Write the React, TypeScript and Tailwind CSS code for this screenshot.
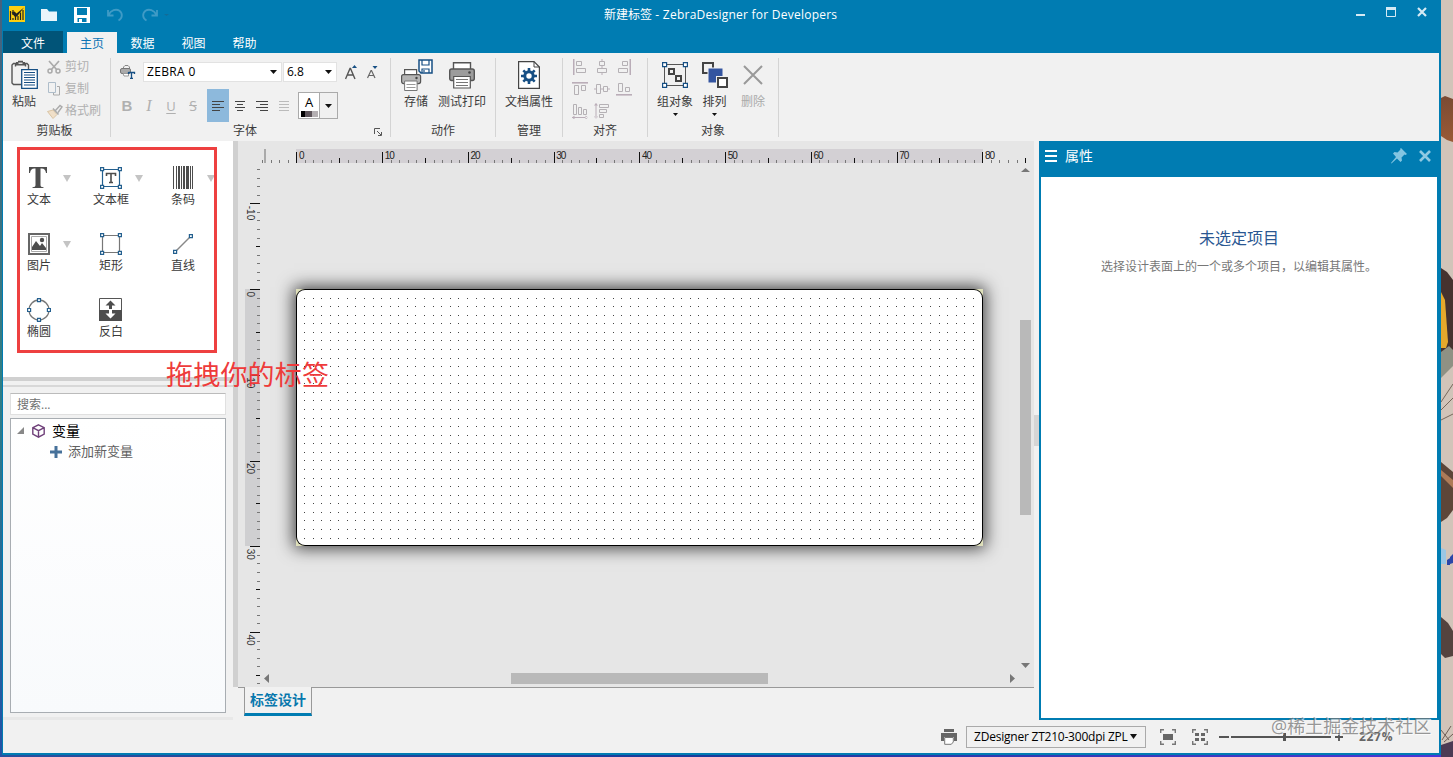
import type { ReactNode } from "react";

const STEP = 8.575;

function Svg({ w, h, children, className = "" }: { w: number; h: number; children: ReactNode; className?: string }) {
  return (
    <svg width={w} height={h} viewBox={`0 0 ${w} ${h}`} fill="none" className={`block shrink-0 ${className}`}>
      {children}
    </svg>
  );
}

function Down({ color = "#111", w = 8, h = 5 }: { color?: string; w?: number; h?: number }) {
  return (
    <Svg w={w} h={h}>
      <path d={`M0 0H${w}L${w / 2} ${h}Z`} fill={color} />
    </Svg>
  );
}

function TitleBar() {
  return (
    <div className="flex h-[30px] shrink-0 items-center pl-[6px] text-white">
      <Svg w={16} h={16} className="mr-[16px] -mt-[2px]">
        <rect width="16" height="16" fill="#fccf10" />
        <path d="M1.500 5v9M4 4v5M4 12v2M6.500 10v4M9 10v4M11.500 6.500v7.500M14 4v10" stroke="#222" strokeWidth="1.200" />
        <path d="M2.500 6.500L5.500 5.500 7.500 7.500 15 1.500 8 10.500 5.500 10.500Z" fill="#222" />
      </Svg>
      <Svg w={16} h={12} className="mr-[17px]">
        <path d="M0 0h6l2 2.500h8V12H0Z" fill="#e9f5fb" />
      </Svg>
      <Svg w={16} h={16} className="mr-[17px]">
        <path d="M0 0h16v16H0Z" fill="#fff" />
        <path d="M3 1h10v7H3ZM3.500 11h9v4h-9Z" fill="#007cb2" />
        <path d="M5 12h3v3H5Z" fill="#fff" />
      </Svg>
      <Svg w={17} h={14} className="mr-[17px]">
        <path d="M1 2v5.500h5.500M1.500 7C4 2 9 .5 12.500 2.800C16 5.500 15.500 10.500 11.500 12.500" stroke="#3f9bc6" strokeWidth="1.800" />
      </Svg>
      <Svg w={17} h={14}>
        <path d="M16 2v5.500h-5.500M15.500 7C13 2 8 .5 4.500 2.800C1 5.500 1.500 10.500 5.500 12.500" stroke="#3f9bc6" strokeWidth="1.800" />
      </Svg>
      <Svg w={6} h={4} className="ml-[6px]">
        <path d="M0 1h5L2.500 3Z" fill="#126c98" />
      </Svg>
      <div className="flex h-[30px] flex-1 items-center pl-[434px] text-[12px] leading-[30px] tracking-[0.240px]">
        <span className="tracking-normal">新建标签</span>
        <span className="whitespace-pre"> - ZebraDesigner for Developers</span>
      </div>
      <Svg w={9} h={3} className="mr-[21px] mt-[1px]">
        <path d="M0 0h9v2H0Z" fill="#d5eaf4" />
      </Svg>
      <Svg w={10} h={10} className="mr-[21px] -mt-[6px]">
        <path d="M.5 1.500h9v8h-9Z" stroke="#d5eaf4" />
        <path d="M0 0h10v3H0Z" fill="#d5eaf4" />
      </Svg>
      <Svg w={10} h={10} className="mr-[12px] -mt-[6px]">
        <path d="M1 1l8 8M9 1l-8 8" stroke="#d5eaf4" strokeWidth="2.200" />
      </Svg>
    </div>
  );
}

function Tabs() {
  return (
    <div className="flex h-[23px] shrink-0 text-[12px] leading-[25px] text-white">
      <div className="mt-[1px] h-[22px] w-[60px] bg-[#015478] text-center">文件</div>
      <div className="ml-[4px] mt-[2px] h-[21px] w-[50px] bg-[#f1f1f1] text-center leading-[23px] text-[#0c74b5]">主页</div>
      <div className="mt-[1px] w-[51px] text-center">数据</div>
      <div className="mt-[1px] w-[51px] text-center">视图</div>
      <div className="mt-[1px] w-[51px] text-center">帮助</div>
    </div>
  );
}

function Group({ label, width, labelPad = "", children }: { label: string; width: string; labelPad?: string; children: ReactNode }) {
  return (
    <div className={`relative mb-[3px] mt-[5px] flex h-[79px] shrink-0 flex-col border-r border-[#d4d4d4] ${width}`}>
      <div className="flex h-[65px] shrink-0">{children}</div>
      <div className={`h-[14px] text-center text-[12px] leading-[15px] text-[#3c3c3c] ${labelPad}`}>{label}</div>
    </div>
  );
}

function BigButton({ label, width, children, disabled, arrow }: { label: string; width: string; children: ReactNode; disabled?: boolean; arrow?: boolean }) {
  return (
    <div className={`flex shrink-0 flex-col items-center ${width}`}>
      <div className="flex h-[34px] items-center justify-center">{children}</div>
      <div className={`h-[20px] whitespace-nowrap text-[12px] leading-[19px] ${disabled ? "text-[#aaa]" : "text-[#3c3c3c]"}`}>{label}</div>
      {arrow && (
        <div className="pt-[1px]">
          <Down w={5} h={3} />
        </div>
      )}
    </div>
  );
}

function ClipItem({ label, children }: { label: string; children: ReactNode }) {
  return (
    <div className="flex h-[22px] items-center text-[12px] leading-[18px] text-[#b0b0b0]">
      <div className="flex w-[18px] items-center">{children}</div>
      {label}
    </div>
  );
}

function Lines({ xs, color = "#444" }: { xs: number[][]; color?: string }) {
  return (
    <Svg w={12} h={12}>
      <path d={xs.map(([a, b], i) => `M${a} ${i * 3 + 1.5}H${b}`).join("")} stroke={color} />
    </Svg>
  );
}

function FontGroup() {
  return (
    <Group label="字体" width="w-[280px]" labelPad="pr-[11px]">
      <div className="flex flex-col pl-[9px]">
        <div className="mt-[4px] flex h-[20px] items-center">
          <Svg w={16} h={14} className="mr-[7px]">
            <path d="M3.500 4.500V2L5 .5h3L9.500 2v2.500" stroke="#888" />
            <rect x=".5" y="3.500" width="10" height="5" rx="1.500" fill="#aaa" stroke="#777" />
            <path d="M3 8.500h5.500v2.500H4Z" fill="#fff" stroke="#999" />
            <path d="M8.500 7.500h6v1.500M11.500 7.500v6M10 13.500h3M8.500 7v2" stroke="#164f84" strokeWidth="1.300" />
          </Svg>
          <div className="flex h-[20px] w-[139px] items-center justify-between border border-[#e2e2e2] bg-white pl-[3px] pr-[4px] text-[12px] leading-[20px] tracking-[0.350px] text-black">
            ZEBRA 0<Down w={7} h={4} />
          </div>
          <div className="ml-[1px] flex h-[20px] w-[54px] items-center justify-between border border-[#e2e2e2] bg-white pl-[3px] pr-[4px] text-[12px] leading-[20px] text-black">
            6.8<Down w={7} h={4} />
          </div>
          <Svg w={13} h={15} className="ml-[8px]">
            <path d="M.5 14L5 3.500h.500L10 14M2 10h6.500" stroke="#555" strokeWidth="1.400" />
            <path d="M7 3h5L9.500 0Z" fill="#164f84" />
          </Svg>
          <Svg w={12} h={13} className="ml-[9px]">
            <path d="M.5 12L4 4.500h.500L8 12M2 9.500h5" stroke="#666" strokeWidth="1.200" />
            <path d="M5.500 0h5L8 3Z" fill="#164f84" />
          </Svg>
        </div>
        <div className="mt-[7px] flex h-[33px] items-center text-[#b0b0b0]">
          <div className="w-[14px] text-center font-['Liberation_Sans'] text-[15px] font-bold leading-[20px]">B</div>
          <div className="ml-[8px] w-[14px] text-center font-['Liberation_Serif'] text-[16px] italic leading-[20px]">I</div>
          <div className="ml-[8px] w-[14px] text-center text-[13px] leading-[20px] underline underline-offset-2">U</div>
          <div className="ml-[8px] w-[14px] text-center text-[14px] leading-[20px] line-through">S</div>
          <div className="ml-[7px] flex h-[33px] w-[22px] items-center justify-center bg-[#8db9dc]">
            <Lines xs={[[0, 12], [0, 8], [0, 12], [0, 8]]} />
          </div>
          <div className="ml-[5px]"><Lines xs={[[1, 11], [3, 9], [1, 11], [3, 9]]} /></div>
          <div className="ml-[10px]"><Lines xs={[[0, 12], [4, 12], [0, 12], [4, 12]]} /></div>
          <div className="ml-[10px]"><Lines color="#bbb" xs={[[1, 11], [1, 11], [1, 11], [1, 11]]} /></div>
          <div className="ml-[8px] flex h-[27px] w-[40px] border border-[#aaa]">
            <div className="flex w-[20px] flex-col items-center bg-white">
              <div className="h-[18px] text-[13px] leading-[18px] text-black">A</div>
              <Svg w={17} h={6}>
                <path d="M0 0h4v6H0Z" fill="#000" />
                <path d="M4 0h7v6H4Z" fill="#5d545a" />
                <path d="M11 0h6v6h-6Z" fill="#b5b0b3" />
              </Svg>
            </div>
            <div className="flex flex-1 items-center justify-center border-l border-[#aaa] bg-[#f0f0f0]">
              <Down w={7} h={4} />
            </div>
          </div>
        </div>
      </div>
      <Svg w={8} h={8} className="absolute bottom-[1px] right-[8px]">
        <path d="M.5 6V.5H6M3 3l4 4M7.500 4v3.500H4" stroke="#555" />
      </Svg>
    </Group>
  );
}

function Printer() {
  return (
    <Svg w={26} h={27}>
      <path d="M4.500 8V.7h17V8" fill="#fff" stroke="#555" strokeWidth="1.400" />
      <rect x=".7" y="7" width="24.600" height="11.500" rx="2" fill="#9c9c9c" stroke="#555" strokeWidth="1.400" />
      <circle cx="20.500" cy="10.500" r="1.300" fill="#444" />
      <path d="M4.700 14.500h16.600V26H4.700Z" fill="#fff" stroke="#555" strokeWidth="1.200" />
      <path d="M7 17.500h12M7 20.500h12M7 23.500h12" stroke="#777" />
    </Svg>
  );
}

const alignIcons = [
  { bar: "M1 0h1.500v16H1Z", boxes: "M4.500 2.500h5v4h-5ZM4.500 9.500h9v4h-9Z" },
  { bar: "M7.500 0h1v3h-1ZM7.500 7h1v2h-1ZM7.500 14h1v2h-1Z", boxes: "M5.500 2.500h5v4h-5ZM3.500 9.500h9v4h-9Z" },
  { bar: "M13.500 0H15v16h-1.500Z", boxes: "M6.500 2.500h5v4h-5ZM2.500 9.500h9v4h-9Z" },
  { bar: "M0 1h16v1.600H0Z", boxes: "M2.500 4.500h4v9h-4ZM9.500 4.500h4v5h-4Z" },
  { bar: "M0 7.500h2v1H0ZM6 7.500h3v1H6ZM14 7.500h2v1h-2Z", boxes: "M2.500 3.500h4v9h-4ZM9.500 5.500h4v5h-4Z" },
  { bar: "M0 13h16v1.600H0Z", boxes: "M2.500 2.500h4v8h-4ZM9.500 6.500h4v4h-4Z" },
  { bar: "M0 14h16v1H0ZM0 14.500l2.500-2v4ZM16 14.500l-2.500-2v4Z", boxes: "M1.500 1.500h3v10h-3ZM6.500 4.500h3v7h-3ZM11.500 6.500h3v5h-3Z" },
  { bar: "M1.500 0h1v16h-1ZM2 0l2 2.500H0ZM2 16l2-2.500H0Z", boxes: "M5.500 1.500h9v3h-9ZM5.500 6.500h7v3h-7ZM5.500 11.500h4v3h-4Z" },
];

function Ribbon() {
  return (
    <div className="flex h-[87px] shrink-0 bg-[#f1f1f1]">
      <Group label="剪贴板" width="w-[108px]" labelPad="pr-[4px]">
        <BigButton label="粘贴" width="w-[42px]">
          <Svg w={27} h={30}>
            <path d="M5 3.500H2.500L1 5v18l1.500 1.500h8M13 3.500h3L17.500 5v5M4.500 6.500v-3M14.500 6.500v-3" stroke="#555" strokeWidth="1.400" />
            <path d="M5 2h2V.8h5V2h2v3.500H5Z" fill="#555" />
            <path d="M7.500 2.500h4V4h-4Z" fill="#ddd" />
            <path d="M10.700 9.700h15.600v18.600H10.700Z" fill="#fff" stroke="#164f84" strokeWidth="1.300" />
            <path d="M13 12.500h11M13 15h11M13 17.500h11M13 20h11M13 22.500h11M13 25h11" stroke="#164f84" strokeWidth="1.200" />
          </Svg>
        </BigButton>
        <div className="-mt-[2px] ml-[2px] flex flex-col">
          <ClipItem label="剪切">
            <Svg w={14} h={14}>
              <path d="M2 1l8 9M12 1l-8 9" stroke="#aaa" strokeWidth="1.700" />
              <circle cx="3" cy="11" r="2" stroke="#aaa" strokeWidth="1.500" />
              <circle cx="11" cy="11" r="2" stroke="#aaa" strokeWidth="1.500" />
            </Svg>
          </ClipItem>
          <ClipItem label="复制">
            <Svg w={14} h={14}>
              <path d="M1.500 .5h7v10h-7Z" stroke="#aebdca" />
              <path d="M10 4.500h2.500v8.500h-6V11" stroke="#aaa" />
            </Svg>
          </ClipItem>
          <ClipItem label="格式刷">
            <Svg w={16} h={15}>
              <path d="M.5 7.500L6 6l4 4.500L6 14.500Z" fill="#f0dfc8" stroke="#d9c4a4" />
              <path d="M6 4.500l5.500 6M8.500 6.500L13 1.500l2 1.500-4 5.500" stroke="#aaa" strokeWidth="1.400" />
            </Svg>
          </ClipItem>
        </div>
      </Group>
      <FontGroup />
      <Group label="动作" width="w-[105px]">
        <BigButton label="存储" width="ml-[2px] w-[46px]">
          <Svg w={32} h={33} className="ml-[2px]">
            <path d="M3.600 16v-5.400h12V16" fill="#fff" stroke="#555" strokeWidth="1.200" />
            <rect x=".6" y="15.600" width="19" height="9" rx="2" fill="#b5b5b5" stroke="#555" strokeWidth="1.200" />
            <circle cx="15.500" cy="19" r="1.200" fill="#444" />
            <path d="M3.600 22h12.500v9.500H3.600Z" fill="#fff" stroke="#777" />
            <path d="M5.500 25.500h9M5.500 28.500h9" stroke="#999" />
            <path d="M18 1h13v13H20l-2-2Z" fill="#fff" stroke="#164f84" strokeWidth="1.500" />
            <path d="M21 1v5h7V1M21 14v-4h7v4M23 11v2" stroke="#164f84" strokeWidth="1.200" />
          </Svg>
        </BigButton>
        <BigButton label="测试打印" width="w-[46px]"><Printer /></BigButton>
      </Group>
      <Group label="管理" width="w-[67px]">
        <BigButton label="文档属性" width="w-[66px]">
          <Svg w={22} h={28}>
            <path d="M.6.6H16L21.400 6v21.400H.6Z" fill="#fff" stroke="#444" strokeWidth="1.200" />
            <path d="M16 .6V6h5.400" stroke="#444" />
            <circle cx="11" cy="15" r="4.200" stroke="#164f84" strokeWidth="3" />
            <path d="M11 7v3M11 20v3M3 15h3M16 15h3M5.300 9.300l2 2M14.700 18.700l2 2M5.300 20.700l2-2M14.700 11.300l2-2" stroke="#164f84" strokeWidth="2.600" />
          </Svg>
        </BigButton>
      </Group>
      <Group label="对齐" width="w-[85px]">
        <div className="grid auto-rows-[16px] grid-cols-[16px_16px_16px] content-start gap-[6px] pl-[9px] pt-[1px]">
          {alignIcons.map((icon, i) => (
            <Svg key={i} w={16} h={16}>
              <path d={icon.bar} fill="#baadb8" />
              <path d={icon.boxes} stroke="#b5b1b5" />
            </Svg>
          ))}
        </div>
      </Group>
      <Group label="对象" width="w-[131px]">
        <BigButton label="组对象" width="ml-[7px] w-[40px]" arrow>
          <Svg w={26} h={26}>
            <path d="M2.500 2.500h21v21h-21Z" stroke="#555" />
            <path d="M7 7h5v5H7ZM14 14h5v5h-5Z" stroke="#444" strokeWidth="2" />
            <path d="M.6.6h4v4h-4ZM21.400.6h4v4h-4ZM.6 21.400h4v4h-4ZM21.400 21.400h4v4h-4Z" fill="#fff" stroke="#164f84" strokeWidth="1.200" />
          </Svg>
        </BigButton>
        <BigButton label="排列" width="w-[39px]" arrow>
          <Svg w={26} h={27}>
            <path d="M1 1h10v10H1Z" stroke="#444" strokeWidth="2" />
            <path d="M6 6h15v15H6Z" fill="#3455a0" stroke="#f1f1f1" />
            <path d="M14 14h12v12H14Z" fill="#f1f1f1" />
            <path d="M16 16h9v9h-9Z" fill="#fff" stroke="#444" strokeWidth="2" />
          </Svg>
        </BigButton>
        <BigButton label="删除" width="w-[38px]" disabled>
          <Svg w={20} h={20}>
            <path d="M1 1l18 18M19 1L1 19" stroke="#999" strokeWidth="2" />
          </Svg>
        </BigButton>
      </Group>
    </div>
  );
}

const handle = "#24608f";

const tools: { label: string; arrow?: boolean; icon: ReactNode }[] = [
  {
    label: "文本",
    arrow: true,
    icon: (
      <Svg w={20} h={22}>
        <path d="M0 0h18v6h-1c-.5-3-1.500-4.500-4.500-4.500h-1V18c0 1.800.8 2 3 2.200V21H3.500v-.8c2.200-.2 3-.4 3-2.200V1.500h-1C2.500 1.500 1.500 3 1 6H0Z" fill="#4d4d4d" />
      </Svg>
    ),
  },
  {
    label: "文本框",
    arrow: true,
    icon: (
      <Svg w={22} h={22}>
        <path d="M2.500 2.500h17v17h-17Z" stroke="#24608f" strokeWidth="1.200" />
        <path d="M6.500 9V6.500h9V9M11 6.500v9M9 15.500h4" stroke="#4d4d4d" strokeWidth="1.600" />
        <path d="M.6.6h3v3h-3ZM18.400.6h3v3h-3ZM.6 18.400h3v3h-3ZM18.400 18.400h3v3h-3Z" fill="#fff" stroke={handle} strokeWidth="1.200" />
      </Svg>
    ),
  },
  {
    label: "条码",
    arrow: true,
    icon: (
      <Svg w={20} h={23}>
        <path d="M0 0h1v23H0ZM3 0h1v23H3ZM5 0h2v23H5ZM8 0h1v23H8ZM10 0h2v23h-2ZM13 0h3v23h-3ZM17 0h1v23h-1ZM19 0h1v23h-1Z" fill="#4d4d4d" />
      </Svg>
    ),
  },
  {
    label: "图片",
    arrow: true,
    icon: (
      <Svg w={22} h={22}>
        <path d="M1 1h20v20H1Z" stroke="#666" strokeWidth="2" />
        <path d="M3.500 3.500h15v15h-15Z" stroke="#aaa" />
        <path d="M4 17v-3l4-6 4 5 2-3 4 5v2Z" fill="#4d4d4d" />
        <circle cx="14" cy="7" r="2.200" fill="#4d4d4d" />
      </Svg>
    ),
  },
  {
    label: "矩形",
    icon: (
      <Svg w={22} h={22}>
        <path d="M2.500 2.500h17v17h-17Z" stroke="#777" strokeWidth="1.200" />
        <path d="M.6.6h3v3h-3ZM18.400.6h3v3h-3ZM.6 18.400h3v3h-3ZM18.400 18.400h3v3h-3Z" fill="#fff" stroke={handle} strokeWidth="1.200" />
      </Svg>
    ),
  },
  {
    label: "直线",
    icon: (
      <Svg w={20} h={20}>
        <path d="M2 18L18 2" stroke="#888" strokeWidth="1.400" />
        <path d="M.6 16.400h3v3h-3ZM16.400.6h3v3h-3Z" fill="#fff" stroke={handle} strokeWidth="1.200" />
      </Svg>
    ),
  },
  {
    label: "椭圆",
    icon: (
      <Svg w={24} h={24}>
        <circle cx="12" cy="12" r="10" stroke="#777" strokeWidth="1.300" />
        <path d="M10.500.6h3v3h-3ZM10.500 20.400h3v3h-3ZM.6 10.500h3v3h-3ZM20.400 10.500h3v3h-3Z" fill="#fff" stroke={handle} strokeWidth="1.200" />
      </Svg>
    ),
  },
  {
    label: "反白",
    icon: (
      <Svg w={23} h={23} className="mr-[1px]">
        <path d="M.5.5h22v22H.5Z" fill="#fff" stroke="#555" />
        <path d="M0 12h23v11H0Z" fill="#4d4d4d" />
        <path d="M11.500 2.500l5 5h-3.500V11h-3V7.500H6.500Z" fill="#4d4d4d" />
        <path d="M11.500 20.500l5-5h-3.500V12h-3v3.500H6.500Z" fill="#fff" />
      </Svg>
    ),
  },
];

function Sidebar() {
  return (
    <div className="flex w-[230px] shrink-0 flex-col">
      <div className="relative mt-[1px] h-[236px] shrink-0 bg-white">
        <div className="grid auto-rows-[66px] grid-cols-[72px_72px_72px] pt-[23px]">
          {tools.map((t) => (
            <div key={t.label} className="relative flex flex-col items-center">
              <div className="flex h-[27px] items-center">{t.icon}</div>
              <div className="text-[12px] leading-[18px] text-[#3a3a3a]">{t.label}</div>
              {t.arrow && (
                <div className="absolute left-[60px] top-[11px]">
                  <Down color="#c4c4c4" w={8} h={7} />
                </div>
              )}
            </div>
          ))}
        </div>
        <div className="absolute left-[14px] top-[6px] h-[206px] w-[200px] border-[3px] border-[#ee4040]" />
        <div className="absolute left-[163px] top-[216px] z-10 whitespace-nowrap text-[27px] leading-[36px] tracking-[0.200px] text-[#ee3b3b]">拖拽你的标签</div>
      </div>
      <div className="h-[4px] shrink-0 bg-[#d0d0d0]" />
      <div className="h-[4px] shrink-0 bg-[#f1f1f1]" />
      <div className="h-[2px] shrink-0 bg-[#d8d8d8]" />
      <div className="flex h-[333px] flex-col border-b-[3px] border-[#e8e8e8] bg-[#f1f1f1] px-[7px] pb-[3px] pt-[6px]">
        <div className="h-[22px] w-[216px] shrink-0 border border-[#e0e0e0] border-t-[#bbb] bg-white pl-[6px] text-[12px] leading-[21px] text-[#707070]">搜索...</div>
        <div className="mt-[3px] h-[295px] w-[216px] border border-[#a8adb2] bg-gradient-to-b from-white to-[#f8fafc]">
          <div className="mt-[1px] flex h-[21px] items-center text-[14px] leading-[21px] text-black">
            <Svg w={7} h={7} className="ml-[6px] mr-[8px]">
              <path d="M7 0v7H0Z" fill="#888" />
            </Svg>
            <Svg w={13} h={14} className="mr-[7px]">
              <path d="M6.500 .8L12.200 3.700v6.500L6.500 13.200.8 10.200v-6.500ZM.8 3.700L6.500 6.700l5.700-3M6.500 6.700v6.500" stroke="#70417a" strokeWidth="1.400" />
            </Svg>
            变量
          </div>
          <div className="flex h-[21px] items-center pl-[39px] text-[13px] leading-[21px] text-[#606060]">
            <Svg w={12} h={12} className="mr-[6px]">
              <path d="M6 0v12M0 6h12" stroke="#46719a" strokeWidth="3" />
            </Svg>
            添加新变量
          </div>
        </div>
      </div>
    </div>
  );
}

function TopRuler() {
  const ticks = [];
  for (let i = -4; i <= 85; i++) {
    const x = Math.round(58.3 + i * STEP);
    const len = i % 10 === 0 ? 11 : i % 5 === 0 ? 5 : 3;
    ticks.push(<rect key={i} x={x} y={22 - len} width="1" height={len} fill={i % 5 === 0 ? "#111" : "#777"} />);
  }
  return (
    <Svg w={796} h={23}>
      <rect x="58" y="8" width="687" height="14" fill="#d3d0d4" />
      <rect x="26" y="8" width="2" height="14" fill="#aaa" />
      {ticks}
      {[0, 10, 20, 30, 40, 50, 60, 70, 80].map((n) => (
        <text key={n} x={61 + n * STEP} y="18" fontSize="10" textLength={n ? 10 : 5} fill="#222" fontFamily="Liberation Sans, sans-serif">
          {n}
        </text>
      ))}
    </Svg>
  );
}

function LeftRuler() {
  const ticks = [];
  for (let i = -14; i <= 46; i++) {
    const y = Math.round(125 + i * STEP);
    const len = i % 10 === 0 ? 10 : i % 5 === 0 ? 4 : 3;
    ticks.push(<rect key={i} x={22 - len} y={y} width={len} height="1" fill={i % 5 === 0 ? "#111" : "#777"} />);
  }
  return (
    <Svg w={24} h={523}>
      <rect x="7" y="125" width="15" height="257" fill="#cfcfd1" />
      {ticks}
      {[-10, 0, 10, 20, 30, 40].map((n) => (
        <text key={n} transform={`translate(9 ${127.5 + n * STEP}) rotate(90)`} fontSize="10" fill="#333" fontFamily="Liberation Sans, sans-serif">
          {n}
        </text>
      ))}
    </Svg>
  );
}

function LabelSurface() {
  let dots = "";
  for (let r = 0; r < 29; r++) {
    for (let c = 0; c < 79; c++) {
      dots += `M${Math.round(8 + c * STEP)} ${Math.round(8.5 + r * STEP) + 0.5}h1`;
    }
  }
  return (
    <div className="ml-[34px] mt-[125px] h-[257px] w-[687px] bg-[#dedfba] shadow-[0_0_16px_2px_rgba(0,0,0,0.75)]">
      <div className="h-[257px] w-[687px] overflow-hidden rounded-[9px] bg-black p-px">
        <div className="h-[255px] w-[685px] overflow-hidden rounded-[8px] bg-white">
          <Svg w={687} h={257} className="-ml-px -mt-px">
            <path d={dots} stroke="#444" />
          </Svg>
        </div>
      </div>
    </div>
  );
}

function Workspace() {
  return (
    <div className="flex w-[796px] shrink-0 flex-col">
      <div className="mt-[1px] flex h-[546px] shrink-0 flex-col bg-[#e6e6e6]">
        <TopRuler />
        <div className="flex h-[523px]">
          <LeftRuler />
          <div className="flex flex-1 flex-col">
            <div className="flex h-[507px]">
              <div className="w-[755px] overflow-hidden">
                <LabelSurface />
              </div>
              <div className="flex w-[16px] flex-col items-center pt-[4px]">
                <Svg w={9} h={4}>
                  <path d="M0 4h9L4.500 0Z" fill="#777" />
                </Svg>
                <div className="mt-[148px] h-[195px] w-[11px] bg-[#b9b9b9]" />
                <div className="mt-[148px]">
                  <Down color="#777" w={9} h={5} />
                </div>
              </div>
            </div>
            <div className="flex h-[14px] items-center">
              <Svg w={5} h={9} className="ml-[2px]">
                <path d="M5 0v9L0 4.500Z" fill="#777" />
              </Svg>
              <div className="ml-[242px] h-[11px] w-[257px] bg-[#b9b9b9]" />
              <Svg w={5} h={9} className="ml-[242px]">
                <path d="M0 0v9l5-4.500Z" fill="#777" />
              </Svg>
            </div>
          </div>
        </div>
      </div>
      <div className="flex h-[33px]">
        <div className="w-[6px] border-t border-[#999]" />
        <div className="h-[29px] w-[68px] border-x border-b-[3px] border-x-[#999] border-b-[#007cb2] text-center text-[14px] font-bold leading-[26px] text-[#0878ad]">标签设计</div>
        <div className="flex-1 border-t border-[#999]" />
      </div>
    </div>
  );
}

function Properties() {
  return (
    <div className="mt-[1px] flex h-[579px] w-[400px] shrink-0 flex-col border-b-2 border-l-2 border-r-2 border-[#007cb2] bg-white">
      <div className="flex h-[36px] shrink-0 items-center bg-[#007cb2] pb-[6px] pl-[4px] pr-[6px] text-[14px] leading-[20px] text-white">
        <Svg w={12} h={12} className="mr-[8px]">
          <path d="M0 1h12M0 6h12M0 11h12" stroke="#fff" strokeWidth="2" />
        </Svg>
        <div className="flex-1">属性</div>
        <Svg w={16} h={16} className="mr-[12px]">
          <path d="M10 0l6 6-1.500 1-1-.5-3 3 .5 3-1.500 1.500-3.500-3.500L.5 15.500 0 15l5-6L2 5.500 3.500 4l3 .5 3-3L9 1Z" fill="#83c5e1" />
        </Svg>
        <Svg w={12} h={12}>
          <path d="M1 1l10 10M11 1L1 11" stroke="#90c9e2" strokeWidth="2.600" />
        </Svg>
      </div>
      <div className="mt-[49px] text-center text-[16px] leading-[24px] text-[#2a5792]">未选定项目</div>
      <div className="mt-[7px] text-center text-[12px] leading-[20px] text-[#777]">选择设计表面上的一个或多个项目，以编辑其属性。</div>
    </div>
  );
}

function StatusBar() {
  return (
    <div className="relative flex h-[33px] shrink-0 items-center bg-[#f1f1f1] pl-[938px]">
      <Svg w={16} h={16}>
        <path d="M3 0h10v3H3Z" fill="#666" />
        <path d="M0 4h16v8h-3V8H3v4H0Z" fill="#666" />
        <path d="M3.700 8.500h8.600V13l-2 2.300H3.700Z" fill="#fff" stroke="#777" />
      </Svg>
      <div className="ml-[9px] flex h-[22px] w-[180px] items-center border border-[#aaa] pl-[7px] text-[12px] leading-[20px] tracking-[-0.220px] text-black">
        <div className="w-[156px] whitespace-nowrap">ZDesigner ZT210-300dpi ZPL</div>
        <Down w={7} h={5} />
      </div>
      <Svg w={16} h={16} className="ml-[14px]">
        <path d="M.7 4V.7H4M12 .7h3.300V4M15.300 12v3.300H12M4 15.300H.7V12" stroke="#777" strokeWidth="1.400" />
        <path d="M3 5h10v6H3Z" fill="#666" />
      </Svg>
      <Svg w={16} h={16} className="ml-[16px]">
        <path d="M.7 4V.7H4M12 .7h3.300V4M15.300 12v3.300H12M4 15.300H.7V12" stroke="#777" strokeWidth="1.400" />
        <path d="M3 4h4v3H3ZM9 4h4v3H9ZM3 9h4v3H3ZM9 9h4v3H9Z" fill="#666" />
      </Svg>
      <Svg w={125} h={10} className="ml-[11px]">
        <path d="M0 5h10M12 5h100M116 5h8M120 1v8" stroke="#555" strokeWidth="1.800" />
        <path d="M64 1h3v8h-3Z" fill="#555" />
      </Svg>
      <div className="ml-[15px] pt-[1px] text-[12px] font-bold leading-[20px] tracking-[0.700px] text-[#666]">227%</div>
      <div className="absolute left-[1268px] top-[-6px] whitespace-nowrap text-[18px] leading-[24px] text-[#777]/75 [text-shadow:1px_1px_0_rgba(255,255,255,0.7)]">@稀土掘金技术社区</div>
    </div>
  );
}

function Wallpaper() {
  return (
    <Svg w={12} h={757}>
      <defs>
        <linearGradient id="fur" x1="0" y1="0" x2="0" y2="1">
          <stop offset="0" stopColor="#7a4a33" />
          <stop offset="1" stopColor="#9a5a35" />
        </linearGradient>
      </defs>
      <rect width="12" height="757" fill="#d1c4b9" />
      <path d="M0 98l4-2 8 3v43l-6-2-6-4Z" fill="url(#fur)" />
      <path d="M0 268l6 4 6 8v75l-6 6-6-2Z" fill="#46322f" />
      <path d="M0 292l4 8 3 42-2 6H0Z" fill="#e5a82c" />
      <path d="M0 352l8-6 4 4v16l-12 12Z" fill="#8f9184" />
      <path d="M0 402L12 384M0 410l12-12M0 420l12-6" stroke="#77685c" />
      <path d="M0 462l12 10v38l-6 8-6 4Z" fill="#5d4639" />
      <path d="M0 470l12 10v8L0 476Z" fill="#ad7b58" />
      <path d="M0 548l5 2v14H0Z" fill="#9bc7e5" />
      <path d="M6 560l3-2v7H6ZM9 557l3-3v9l-3 1Z" fill="#2b46a8" />
      <path d="M0 617l7 6 5 8v25l-8 2-4-4Z" fill="#54433f" />
      <path d="M1 740l9-14M3 742l9-8M0 730l8 10" stroke="#6d5d55" />
      <path d="M0 745l12-4v16H0Z" fill="#4c3b54" />
    </Svg>
  );
}

export default function App() {
  return (
    <div className="flex h-[757px] w-[1453px] overflow-hidden bg-[#263d9f] font-['Open_Sans','Noto_Sans_CJK_SC',sans-serif]">
      <div className="w-[2px] shrink-0 bg-gradient-to-b from-[#45617f] via-[#327f84] to-[#2451a6]" />
      <div className="flex w-[1439px] shrink-0 flex-col">
        <div className="flex h-[755px] flex-col border-b-2 border-l border-r-2 border-[#007cb2] bg-[#f1f1f1]">
          <div className="flex h-[53px] shrink-0 flex-col bg-[#007cb2]">
            <TitleBar />
            <Tabs />
          </div>
          <Ribbon />
          <div className="flex h-[580px] shrink-0 bg-[#f1f1f1]">
            <Sidebar />
            <div className="mt-[1px] h-[546px] w-[5px] shrink-0 bg-[#d0d0d0]" />
            <Workspace />
            <div className="flex w-[5px] shrink-0 items-center">
              <div className="h-[31px] w-[5px] bg-[#d5d5d5]" />
            </div>
            <Properties />
          </div>
          <StatusBar />
        </div>
        <div className="h-[2px] bg-gradient-to-r from-[#28509e] via-[#183a9b] to-[#4936d6]" />
      </div>
      <Wallpaper />
    </div>
  );
}
